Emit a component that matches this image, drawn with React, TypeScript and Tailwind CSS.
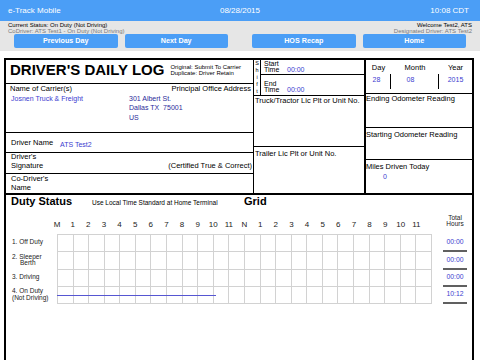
import React from "react";

const BLUE = "text-[#3c3cd0]";
const HOURS = ["M", "1", "2", "3", "4", "5", "6", "7", "8", "9", "10", "11", "N", "1", "2", "3", "4", "5", "6", "7", "8", "9", "10", "11"];

function Btn({ children }: { children: React.ReactNode }) {
  return (
    <div className="flex-1 h-[14px] rounded-[2px] bg-[#4b9ef6] text-white font-bold text-[7.2px] leading-[14px] text-center whitespace-nowrap">
      {children}
    </div>
  );
}

function GridRow({ h, children }: { h: string; children?: React.ReactNode }) {
  return (
    <div className={`relative grid grid-cols-[repeat(24,minmax(0,1fr))] ${h}`}>
      {Array.from({ length: 24 }).map((_, i) => (
        <div key={i} className="border-r border-b border-[#d2d2d2]" />
      ))}
      {children}
    </div>
  );
}

export default function App() {
  return (
    <div className="w-[480px] h-[360px] overflow-hidden bg-white font-['Liberation_Sans',Arial,sans-serif] text-black">
      {/* top bar */}
      <div className="h-[21px] bg-[#4b9ef6] grid grid-cols-3 items-center text-white text-[8px] px-[8px]">
        <div>e-Track Mobile</div>
        <div className="text-center">08/28/2015</div>
        <div className="text-right pr-[3px]">10:08 CDT</div>
      </div>
      {/* status area */}
      <div className="h-[30px] bg-[#e6e6e6]">
        <div className="h-[13px] pt-[1px] px-[8px] flex justify-between text-[6px] leading-[6px] whitespace-nowrap">
          <div>
            <div>Current Status: On Duty (Not Driving)</div>
            <div className="text-[#7a7a7a]">CoDriver: ATS Test1 - On Duty (Not Driving)</div>
          </div>
          <div className="text-right">
            <div>Welcome Test2, ATS</div>
            <div className="text-[#7a7a7a]">Designated Driver: ATS Test2</div>
          </div>
        </div>
        <div className="px-[14px] flex justify-between">
          <div className="w-[214px] flex gap-[7px]">
            <Btn>Previous Day</Btn>
            <Btn>Next Day</Btn>
          </div>
          <div className="w-[214px] flex gap-[7px]">
            <Btn>HOS Recap</Btn>
            <Btn>Home</Btn>
          </div>
        </div>
      </div>

      {/* form */}
      <div className="mt-[7px] ml-[4px] w-[470px] h-[320px] border-x-2 border-t-2 border-black">
        <div className="flex h-[135px] border-b-2 border-black">
          {/* left column */}
          <div className="w-[248px] border-r border-black flex flex-col">
            <div className="h-[24px] border-b border-black flex items-start pt-[2px] pl-[4px] whitespace-nowrap">
              <div className="text-[15px] leading-[15px] font-bold">DRIVER'S DAILY LOG</div>
              <div className="ml-[6px] mt-[2px] text-[6px] leading-[6px]">
                <div>Original: Submit To Carrier</div>
                <div>Duplicate: Driver Retain</div>
              </div>
            </div>
            <div className="h-[49px] border-b border-black pl-[4px] pr-[2px] text-[7.5px] leading-[9px] whitespace-nowrap">
              <div className="flex justify-between">
                <span>Name of Carrier(s)</span>
                <span>Principal Office Address</span>
              </div>
              <div className="flex mt-[1px] text-[7px] leading-[9.3px]">
                <div className={`w-[119px] pl-[1px] ${BLUE}`}>Josnen Truck &amp; Freight</div>
                <div className="text-[#2b2b9a]">
                  <div>301 Albert St.</div>
                  <div>{"Dallas TX\u00A0 75001"}</div>
                  <div>US</div>
                </div>
              </div>
            </div>
            <div className="h-[20px] border-b border-black pl-[5px] flex items-center text-[7.5px] leading-[9px] whitespace-nowrap">
              <span className="w-[49px]">Driver Name</span>
              <span className={`mt-[3px] text-[7px] ${BLUE}`}>ATS Test2</span>
            </div>
            <div className="h-[21px] border-b border-black pl-[5px] pr-[1px] text-[7.5px] leading-[9.3px] whitespace-nowrap">
              <div className="-mt-[1px]">Driver's</div>
              <div className="flex justify-between">
                <span>Signature</span>
                <span>(Certified True &amp; Correct)</span>
              </div>
            </div>
            <div className="h-[19px] pl-[5px] text-[7.5px] leading-[9.3px] whitespace-nowrap">
              <div className="-mt-[0.5px]">Co-Driver's</div>
              <div>Name</div>
            </div>
          </div>

          {/* middle column */}
          <div className="w-[110px] flex flex-col text-[7.5px] leading-[9px] whitespace-nowrap">
            <div className="h-[36px] border-b border-black flex">
              <div className="w-[7px] border-r border-black flex flex-col items-center text-[5.5px] leading-[7px]">
                {["S", "h", "i", "f", "t"].map((c, i) => (
                  <span key={i}>{c}</span>
                ))}
              </div>
              <div className="flex-1 flex flex-col">
                <div className="h-[15px] border-b border-black">
                  <div className="flex items-end pt-[1px] pl-[3px]">
                    <div className="w-[23px] text-[7px] leading-[5.5px]">
                      <div>Start</div>
                      <div>Time</div>
                    </div>
                    <div className={`text-[7px] leading-[5.5px] ${BLUE}`}>00:00</div>
                  </div>
                </div>
                <div className="flex-1">
                  <div className="flex items-end pt-[6px] pl-[3px]">
                    <div className="w-[23px] text-[7px] leading-[5.5px]">
                      <div>End</div>
                      <div>Time</div>
                    </div>
                    <div className={`text-[7px] leading-[5.5px] ${BLUE}`}>00:00</div>
                  </div>
                </div>
              </div>
            </div>
            <div className="h-[51px] border-b border-black pl-[1px]">Truck/Tractor Lic Plt or Unit No.</div>
            <div className="flex-1 pl-[1px] pt-[2px]">Trailer Lic Plt or Unit No.</div>
          </div>

          {/* right column */}
          <div className="flex-1 border-l-2 border-black flex flex-col text-[7.5px] leading-[9px] whitespace-nowrap">
            <div className="h-[34px] border-b border-black">
              <div className="grid grid-cols-[25px_48px_1fr] pt-[3px] text-center">
                <div>Day</div>
                <div>Month</div>
                <div>Year</div>
              </div>
              <div className={`grid grid-cols-[25px_48px_1fr] mt-[2px] h-[15px] text-center text-[7px] ${BLUE}`}>
                <div className="border-r border-black pr-[3px] pt-[1px]">28</div>
                <div className="border-r border-black pr-[8px] pt-[1px]">08</div>
                <div className="pt-[1px]">2015</div>
              </div>
            </div>
            <div className="h-[34px] border-b border-black">Ending Odometer Reading</div>
            <div className="h-[32px] border-b border-black pt-[2px]">Starting Odometer Reading</div>
            <div className="flex-1 pt-[2px]">
              <div>Miles Driven Today</div>
              <div className={`pl-[17px] mt-[1px] text-[7px] ${BLUE}`}>0</div>
            </div>
          </div>
        </div>

        {/* duty status */}
        <div className="flex items-baseline pl-[5px] h-[13px] whitespace-nowrap">
          <span className="w-[81px] text-[11px] leading-[13px] font-bold">Duty Status</span>
          <span className="w-[152px] text-[6.5px]">Use Local Time Standard at Home Terminal</span>
          <span className="text-[11px] leading-[13px] font-bold">Grid</span>
        </div>

        <div className="flex h-[26px] items-end">
          <div className="w-[51px]" />
          <div className="w-[375px] grid grid-cols-[repeat(24,minmax(0,1fr))] pb-[4px] text-[8px] leading-[10px] text-[#222]">
            {HOURS.map((h, i) => (
              <div key={i} className="flex">
                <div className="w-0 flex justify-center">
                  <span className="shrink-0 whitespace-nowrap">{h}</span>
                </div>
              </div>
            ))}
          </div>
          <div className="flex-1 pb-[6px] text-[6.5px] leading-[6.7px] text-center pl-[6px] text-[#222]">
            <div>Total</div>
            <div>Hours</div>
          </div>
        </div>

        <div className="flex">
          <div className="w-[51px] pt-[1px] pl-[6px] text-[6.5px] leading-[6.5px] text-[#222] whitespace-nowrap">
            <div className="h-[17px] flex items-center pb-[2px]">1. Off Duty</div>
            <div className="h-[18px] flex flex-col justify-center pb-[2px]">
              <div>2. Sleeper</div>
              <div className="pl-[8px]">Berth</div>
            </div>
            <div className="h-[17px] flex items-center pb-[2px]">3. Driving</div>
            <div className="h-[17px] flex flex-col justify-center pb-[2px]">
              <div>4. On Duty</div>
              <div>(Not Driving)</div>
            </div>
          </div>
          <div className="w-[375px] border-l border-t border-[#d2d2d2]">
            <GridRow h="h-[17px]" />
            <GridRow h="h-[18px]" />
            <GridRow h="h-[17px]" />
            <GridRow h="h-[17px]">
              <div className="absolute left-[-1px] top-[7.5px] h-[1.5px] w-[42.5%] bg-[#5656d2]" />
            </GridRow>
          </div>
          <div className={`flex-1 pt-[1px] text-[6.8px] leading-[8px] ${BLUE}`}>
            {["h-[17px]", "h-[18px]", "h-[17px]", "h-[17px]"].map((h, i) => (
              <div key={i} className={`${h} ml-[11px] w-[24px] border-b-2 border-[#606060] flex items-center justify-center pb-[1px]`}>
                {["00:00", "00:00", "00:00", "10:12"][i]}
              </div>
            ))}
          </div>
        </div>
      </div>
    </div>
  );
}
